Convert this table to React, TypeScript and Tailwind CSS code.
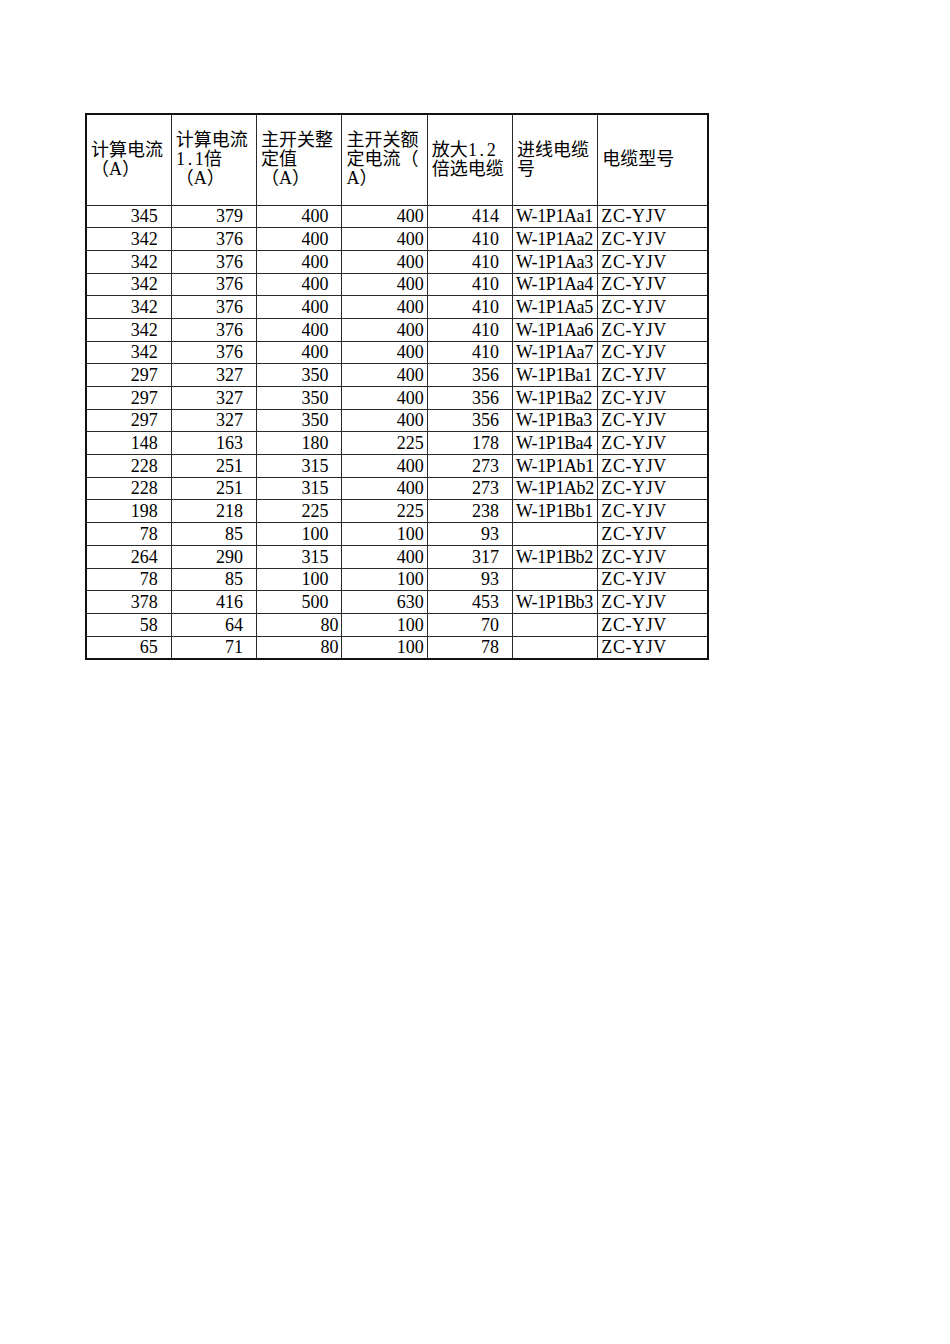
import * as React from "react";

type Row = {
  a: number;
  b: number;
  c: number;
  d: number;
  e: number;
  cable: string;
};

const rows: Row[] = [
  { a: 345, b: 379, c: 400, d: 400, e: 414, cable: "W-1P1Aa1" },
  { a: 342, b: 376, c: 400, d: 400, e: 410, cable: "W-1P1Aa2" },
  { a: 342, b: 376, c: 400, d: 400, e: 410, cable: "W-1P1Aa3" },
  { a: 342, b: 376, c: 400, d: 400, e: 410, cable: "W-1P1Aa4" },
  { a: 342, b: 376, c: 400, d: 400, e: 410, cable: "W-1P1Aa5" },
  { a: 342, b: 376, c: 400, d: 400, e: 410, cable: "W-1P1Aa6" },
  { a: 342, b: 376, c: 400, d: 400, e: 410, cable: "W-1P1Aa7" },
  { a: 297, b: 327, c: 350, d: 400, e: 356, cable: "W-1P1Ba1" },
  { a: 297, b: 327, c: 350, d: 400, e: 356, cable: "W-1P1Ba2" },
  { a: 297, b: 327, c: 350, d: 400, e: 356, cable: "W-1P1Ba3" },
  { a: 148, b: 163, c: 180, d: 225, e: 178, cable: "W-1P1Ba4" },
  { a: 228, b: 251, c: 315, d: 400, e: 273, cable: "W-1P1Ab1" },
  { a: 228, b: 251, c: 315, d: 400, e: 273, cable: "W-1P1Ab2" },
  { a: 198, b: 218, c: 225, d: 225, e: 238, cable: "W-1P1Bb1" },
  { a: 78, b: 85, c: 100, d: 100, e: 93, cable: "" },
  { a: 264, b: 290, c: 315, d: 400, e: 317, cable: "W-1P1Bb2" },
  { a: 78, b: 85, c: 100, d: 100, e: 93, cable: "" },
  { a: 378, b: 416, c: 500, d: 630, e: 453, cable: "W-1P1Bb3" },
  { a: 58, b: 64, c: 80, d: 100, e: 70, cable: "" },
  { a: 65, b: 71, c: 80, d: 100, e: 78, cable: "" },
];

// "0_ " style cells keep a blank the width of one digit on the right
const padded = "pr-[13px]";
const tight = "pr-[3px]";

const border = "border border-[#2a2a2a]";

// half-width digits as in the spreadsheet's song font
function Mono({ text }: { text: string }) {
  return (
    <>
      {text.split("").map((ch, i) => (
        <span key={i} className="inline-block w-[9.4px] text-center">
          {ch}
        </span>
      ))}
    </>
  );
}

function Header({ children }: { children: React.ReactNode }) {
  return (
    <th
      className={`${border} px-[4px] text-left align-middle font-normal leading-[19px]`}
    >
      {children}
    </th>
  );
}

export default function App() {
  return (
    <div
      className="min-h-[1344px] w-[950px] bg-white pl-[85px] pt-[113px] text-[18px] text-black"
      style={{
        fontFamily: '"Liberation Serif", "Noto Sans CJK SC", serif',
      }}
    >
      <table className="table-fixed border-collapse border-2 border-[#111]">
        <colgroup>
          <col className="w-[85.3px]" />
          <col className="w-[85.3px]" />
          <col className="w-[85.3px]" />
          <col className="w-[85.3px]" />
          <col className="w-[85.3px]" />
          <col className="w-[85.3px]" />
          <col className="w-[110px]" />
        </colgroup>
        <thead>
          <tr className="h-[91px]">
            <Header>
              计算电流
              <br />
              （A）
            </Header>
            <Header>
              计算电流
              <br />
              <Mono text="1.1" />倍
              <br />
              （A）
            </Header>
            <Header>
              主开关整
              <br />
              定值
              <br />
              （A）
            </Header>
            <Header>
              主开关额
              <br />
              定电流（
              <br />
              A）
            </Header>
            <Header>
              放大<Mono text="1.2" />
              <br />
              倍选电缆
            </Header>
            <Header>
              进线电缆
              <br />
              号
            </Header>
            <Header>电缆型号</Header>
          </tr>
        </thead>
        <tbody>
          {rows.map((row, i) => (
            <tr key={i} className="h-[22.7px] leading-[21px]">
              <td className={`${border} ${padded} text-right align-bottom`}>
                {row.a}
              </td>
              <td className={`${border} ${padded} text-right align-bottom`}>
                {row.b}
              </td>
              <td
                className={`${border} ${row.c < 100 ? tight : padded} text-right align-bottom`}
              >
                {row.c}
              </td>
              <td className={`${border} ${tight} text-right align-bottom`}>
                {row.d}
              </td>
              <td className={`${border} ${padded} text-right align-bottom`}>
                {row.e}
              </td>
              <td
                className={`${border} whitespace-nowrap pl-[3px] align-bottom tracking-[-0.4px]`}
              >
                {row.cable}
              </td>
              <td
                className={`${border} whitespace-nowrap pl-[3px] align-bottom tracking-[0.6px]`}
              >
                ZC-YJV
              </td>
            </tr>
          ))}
        </tbody>
      </table>
    </div>
  );
}
